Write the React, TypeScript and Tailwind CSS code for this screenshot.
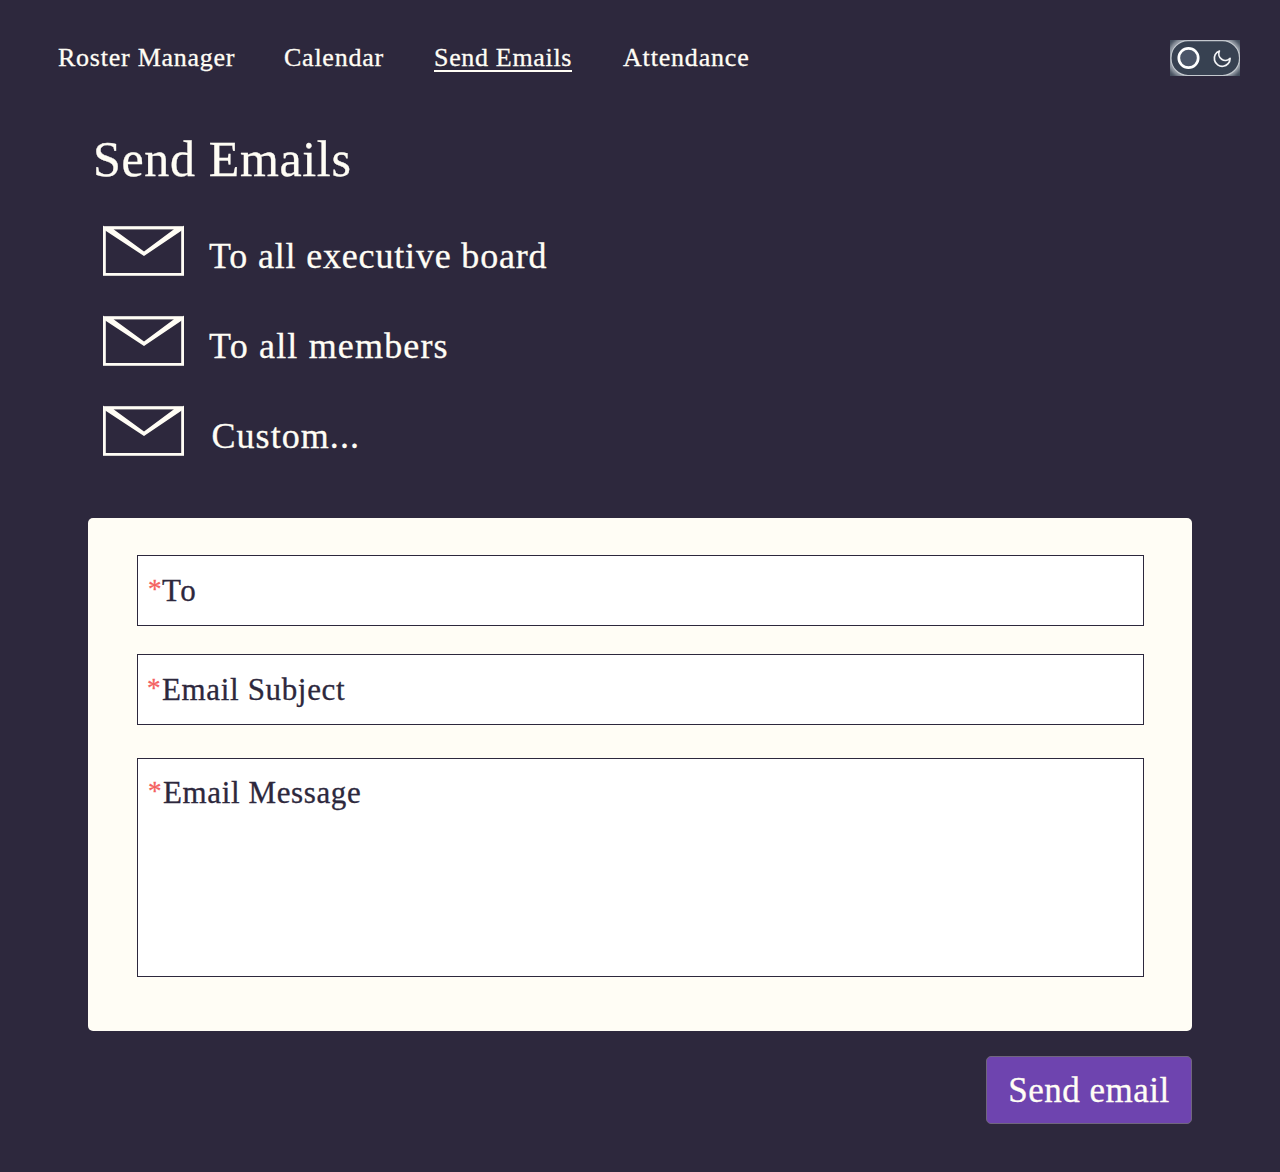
const serif =
  "font-['Liberation_Serif',serif] [-webkit-text-stroke:0.3px_currentColor] whitespace-nowrap";

function Envelope() {
  return (
    <svg className="h-[52px] w-[81px] shrink-0" viewBox="0 0 81 52" fill="none">
      <rect x="1.4" y="2.8" width="78.2" height="46.6" stroke="#fffdf5" strokeWidth="2.8" />
      <path d="M0 0.6 L0 4 L3 6 L41 31 L78 6 L81 4 L81 0.6 L80 1.6 L1 1.6 Z M10.5 4.2 L41 26.4 L71 4.2 Z" fill="#fffdf5" fillRule="evenodd" />
    </svg>
  );
}

function ThemeToggle() {
  return (
    <button className="h-9 w-[70px]" aria-label="Toggle theme">
      <svg width="70" height="36" viewBox="0 0 70 36" fill="none">
        <defs>
          <filter id="glow" x="-20%" y="-20%" width="140%" height="140%">
            <feGaussianBlur stdDeviation="2" />
          </filter>
          <clipPath id="frame">
            <rect width="70" height="36" />
          </clipPath>
        </defs>
        <g clipPath="url(#frame)">
          <rect width="70" height="36" fill="#414c5b" />
          <rect x="0" y="0" width="70" height="36" rx="17" stroke="#dfe3e8" strokeWidth="3" filter="url(#glow)" />
          <rect x="1" y="0.7" width="68.5" height="34.8" rx="17" fill="#374151" stroke="#c3c8ce" strokeWidth="1.2" />
          <circle cx="18.5" cy="18" r="9.7" fill="#4b5568" stroke="#ffffff" strokeWidth="2.7" />
          <path
            d="M49.4 11 A7.9 7.9 0 1 0 60.1 18.4 A6.6 6.6 0 0 1 49.4 11Z"
            stroke="#f3f4f6"
            strokeWidth="1.7"
            strokeLinejoin="round"
          />
        </g>
      </svg>
    </button>
  );
}

function Field({
  label,
  className,
  starClass,
  labelClass,
}: {
  label: string;
  className: string;
  starClass: string;
  labelClass: string;
}) {
  return (
    <div className={`flex w-[1007px] items-start border border-[#2d283d] bg-white text-[31px] leading-[40px] text-[#2d283d] ${className}`}>
      <span className={`${serif} shrink-0 text-[27px] leading-[36px] text-[#f4605f] ${starClass}`}>*</span>
      <span className={`${serif} ${labelClass}`}>{label}</span>
    </div>
  );
}

export default function App() {
  return (
    <div className="h-[1172px] w-[1280px] overflow-hidden bg-[#2d283d] text-[#fffdf5]">
      <header className="flex h-[116px] items-center pr-10 pl-[58px]">
        <nav className={`${serif} flex h-9 items-start text-[26px] leading-[36px] tracking-[0.75px]`}>
          <a className="w-[226px]">Roster Manager</a>
          <a className="w-[150px]">Calendar</a>
          <a className="mr-[51px] h-[32px] w-[138px] border-b-2 border-[#fffdf5] tracking-[0.67px]">Send Emails</a>
          <a className="tracking-[0.82px]">Attendance</a>
        </nav>
        <div className="ml-auto flex">
          <ThemeToggle />
        </div>
      </header>

      <main className="mx-[88px]">
        <h1 className={`${serif} mt-[13px] h-[96px] pl-[5px] text-[50px] leading-[61px] tracking-[0.65px]`}>Send Emails</h1>
        <ul className="flex h-[293px] flex-col text-[36px] leading-[40px]">
          <li className="flex h-[90px] items-start pl-[15px]">
            <Envelope />
            <span className={`${serif} mt-[11px] ml-[25px] tracking-[0.82px]`}>To all executive board</span>
          </li>
          <li className="flex h-[90px] items-start pl-[15px]">
            <Envelope />
            <span className={`${serif} mt-[11px] ml-[25px] tracking-[1.17px]`}>To all members</span>
          </li>
          <li className="flex h-[90px] items-start pl-[15px]">
            <Envelope />
            <span className={`${serif} mt-[11px] ml-[27.5px] tracking-[1.05px]`}>Custom...</span>
          </li>
        </ul>
        <section className="flex h-[513px] flex-col rounded-[5px] bg-[#fffdf5] pt-[37px] pl-[49px]">
          <Field label="To" className="h-[71px] pt-[15px]" starClass="ml-[10px] w-[14px]" labelClass="tracking-[1.6px]" />
          <Field label="Email Subject" className="mt-7 h-[71px] pt-[15px]" starClass="ml-[9px] w-[15px]" labelClass="tracking-[0.65px]" />
          <Field label="Email Message" className="mt-[33px] h-[219px] pt-[14px]" starClass="ml-[10px] w-[15px]" labelClass="tracking-[0.62px]" />
        </section>
        <div className="mt-[25px] flex justify-end">
          <button className={`${serif} flex h-[68px] w-[206px] items-center justify-center rounded-[5px] border border-[#70667e] bg-[#6e44af] pt-0.5 text-[35px] leading-[40px] tracking-[0.5px]`}>
            Send email
          </button>
        </div>
      </main>
    </div>
  );
}
